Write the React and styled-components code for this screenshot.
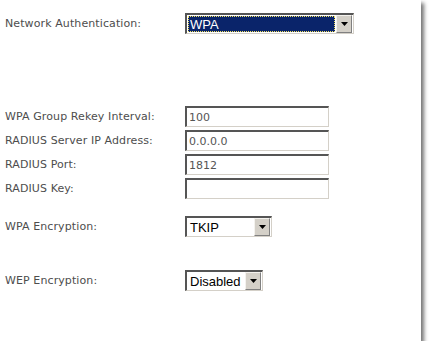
import React from 'react'
import styled, { createGlobalStyle } from 'styled-components'

const GlobalStyle = createGlobalStyle`
  html, body {
    margin: 0;
    padding: 0;
    background: #fff;
  }
`

function Select({ value, width, focused }) {
  return (
    <SelectBox $width={width}>
      <SelectValue $focused={focused}>{value}</SelectValue>
      <ArrowButton>
        <svg width="7" height="4" viewBox="0 0 7 4">
          <polygon points="0,0 7,0 3.5,4" fill="#000" />
        </svg>
      </ArrowButton>
    </SelectBox>
  )
}

function App() {
  return (
    <>
      <GlobalStyle />
      <Panel>
        <Row>
          <Label>Network Authentication:</Label>
          <Select value="WPA" width={169} focused />
        </Row>

        <Group>
          <Row>
            <Label>WPA Group Rekey Interval:</Label>
            <TextField defaultValue="100" />
          </Row>
          <Row>
            <Label>RADIUS Server IP Address:</Label>
            <TextField defaultValue="0.0.0.0" />
          </Row>
          <Row>
            <Label>RADIUS Port:</Label>
            <TextField defaultValue="1812" />
          </Row>
          <Row>
            <Label>RADIUS Key:</Label>
            <TextField defaultValue="" />
          </Row>
        </Group>

        <Row $top={17}>
          <Label>WPA Encryption:</Label>
          <Select value="TKIP" width={87} />
        </Row>

        <Row $top={33}>
          <Label>WEP Encryption:</Label>
          <Select value="Disabled" width={78} />
        </Row>
      </Panel>
    </>
  )
}

const Panel = styled.div`
  width: 421px;
  height: 341px;
  box-sizing: border-box;
  padding: 13px 0 0 5px;
  background: #fff;
  box-shadow: 3px 3px 4px rgba(0, 0, 0, 0.55);
  font-family: "DejaVu Sans", Verdana, sans-serif;
  font-size: 11px;
  color: #4d4d4d;
`

const Group = styled.div`
  margin-top: 72px;
  display: flex;
  flex-direction: column;
  gap: 3px;
`

const Row = styled.div`
  display: grid;
  grid-template-columns: 180px auto;
  align-items: center;
  margin-top: ${p => (p.$top ? `${p.$top}px` : '0')};
`

const Label = styled.span`
  white-space: nowrap;
  letter-spacing: 0.1px;
`

const TextField = styled.input`
  box-sizing: border-box;
  width: 144px;
  height: 21px;
  margin: 0;
  padding: 0 2px;
  border-style: solid;
  border-width: 2px 1px 1px 2px;
  border-color: #555 #d4d0c8 #d4d0c8 #555;
  background: #fff;
  font-family: "DejaVu Sans", Verdana, sans-serif;
  font-size: 11px;
  color: #555;
  outline: none;
`

const SelectBox = styled.div`
  box-sizing: border-box;
  width: ${p => p.$width}px;
  height: 21px;
  display: flex;
  align-items: stretch;
  border-style: solid;
  border-width: 2px 1px 1px 2px;
  border-color: #555 #d4d0c8 #d4d0c8 #555;
  background: #fff;
`

const SelectValue = styled.div`
  flex: 1;
  display: flex;
  align-items: center;
  padding-left: 2px;
  margin: 1px;
  font-family: "Liberation Sans", Arial, sans-serif;
  font-size: 13px;
  color: ${p => (p.$focused ? '#fff' : '#000')};
  background: ${p => (p.$focused ? '#0a246a' : '#fff')};
  outline: ${p => (p.$focused ? '1px dotted #f0e060' : 'none')};
  outline-offset: -1px;
  overflow: hidden;
  white-space: nowrap;
`

const ArrowButton = styled.div`
  box-sizing: border-box;
  width: 16px;
  margin: 0 1px 0 0;
  display: flex;
  align-items: center;
  justify-content: center;
  background: #d4d0c8;
  border-style: solid;
  border-width: 1px;
  border-color: #f4f2ee #808080 #808080 #f4f2ee;
`

export default App
